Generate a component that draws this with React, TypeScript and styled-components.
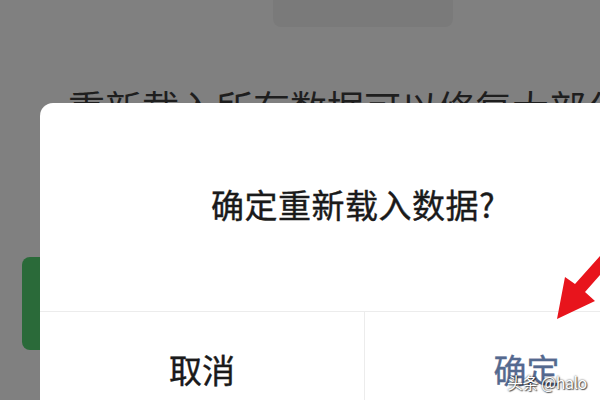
import React from 'react';
import styled, { createGlobalStyle } from 'styled-components';

const GlobalStyle = createGlobalStyle`
  html, body {
    margin: 0;
    padding: 0;
    background: #808080;
  }
  body {
    font-family: "Noto Sans CJK SC", "Noto Sans", sans-serif;
  }
`;

const Screen = styled.div`
  position: relative;
  width: 600px;
  height: 400px;
  overflow: hidden;
  background: #808080;
`;

const Backdrop = styled.div`
  display: flex;
  flex-direction: column;
`;

const TopTab = styled.div`
  align-self: flex-start;
  margin-left: 273px;
  width: 180px;
  height: 27px;
  background: #7a7a7a;
  border-radius: 0 0 8px 8px;
`;

const Hint = styled.div`
  margin: 58px 0 0 68px;
  font-size: 37px;
  line-height: 44px;
  color: #1e1e1e;
  white-space: nowrap;
`;

const SideButton = styled.div`
  margin: 128px 0 0 22px;
  width: 24px;
  height: 93px;
  background: #2a6a39;
  border-radius: 8px 0 0 8px;
`;

const Dialog = styled.div`
  position: absolute;
  left: 40px;
  top: 103px;
  width: 648px;
  height: 360px;
  background: #fff;
  border-radius: 13px;
  display: flex;
  flex-direction: column;
`;

const Title = styled.div`
  height: 209px;
  display: flex;
  align-items: center;
  justify-content: center;
  padding-right: 22px;
  padding-bottom: 6px;
  font-size: 33px;
  color: #1a1a1a;
  letter-spacing: 0.5px;
  border-bottom: 1px solid #ececec;
  box-sizing: border-box;
  -webkit-text-stroke: 0.4px currentColor;
`;

const Buttons = styled.div`
  display: grid;
  grid-template-columns: 1fr 1fr;
  height: 112px;
`;

const Action = styled.div<{ $primary?: boolean }>`
  display: flex;
  align-items: center;
  justify-content: center;
  font-size: 33px;
  color: ${p => (p.$primary ? '#54698f' : '#1a1a1a')};
  border-left: ${p => (p.$primary ? '1px solid #ececec' : 'none')};
  padding-top: 2px;
  -webkit-text-stroke: 0.4px currentColor;
`;

const Arrow = styled.svg`
  position: absolute;
  left: 540px;
  top: 240px;
  width: 60px;
  height: 90px;
`;

const Watermark = styled.div`
  position: absolute;
  left: 507px;
  top: 370px;
  font-size: 16px;
  letter-spacing: -0.5px;
  color: #fff;
  text-shadow: 0 0 2px rgba(0, 0, 0, 0.8), 1px 1px 1px rgba(0, 0, 0, 0.6);
  white-space: nowrap;
`;

export default function App() {
  return (
    <>
      <GlobalStyle />
      <Screen>
        <Backdrop>
          <TopTab />
          <Hint>重新载入所有数据可以修复大部分数据问题</Hint>
          <SideButton />
        </Backdrop>
        <Dialog>
          <Title>确定重新载入数据?</Title>
          <Buttons>
            <Action>取消</Action>
            <Action $primary>确定</Action>
          </Buttons>
        </Dialog>
        <Arrow viewBox="540 240 60 90">
          <polygon
            points="557,319 565,277 575,284 600,256 600,275 585,292 595,301"
            fill="#e8141c"
          />
        </Arrow>
        <Watermark>头条 @halo</Watermark>
      </Screen>
    </>
  );
}
